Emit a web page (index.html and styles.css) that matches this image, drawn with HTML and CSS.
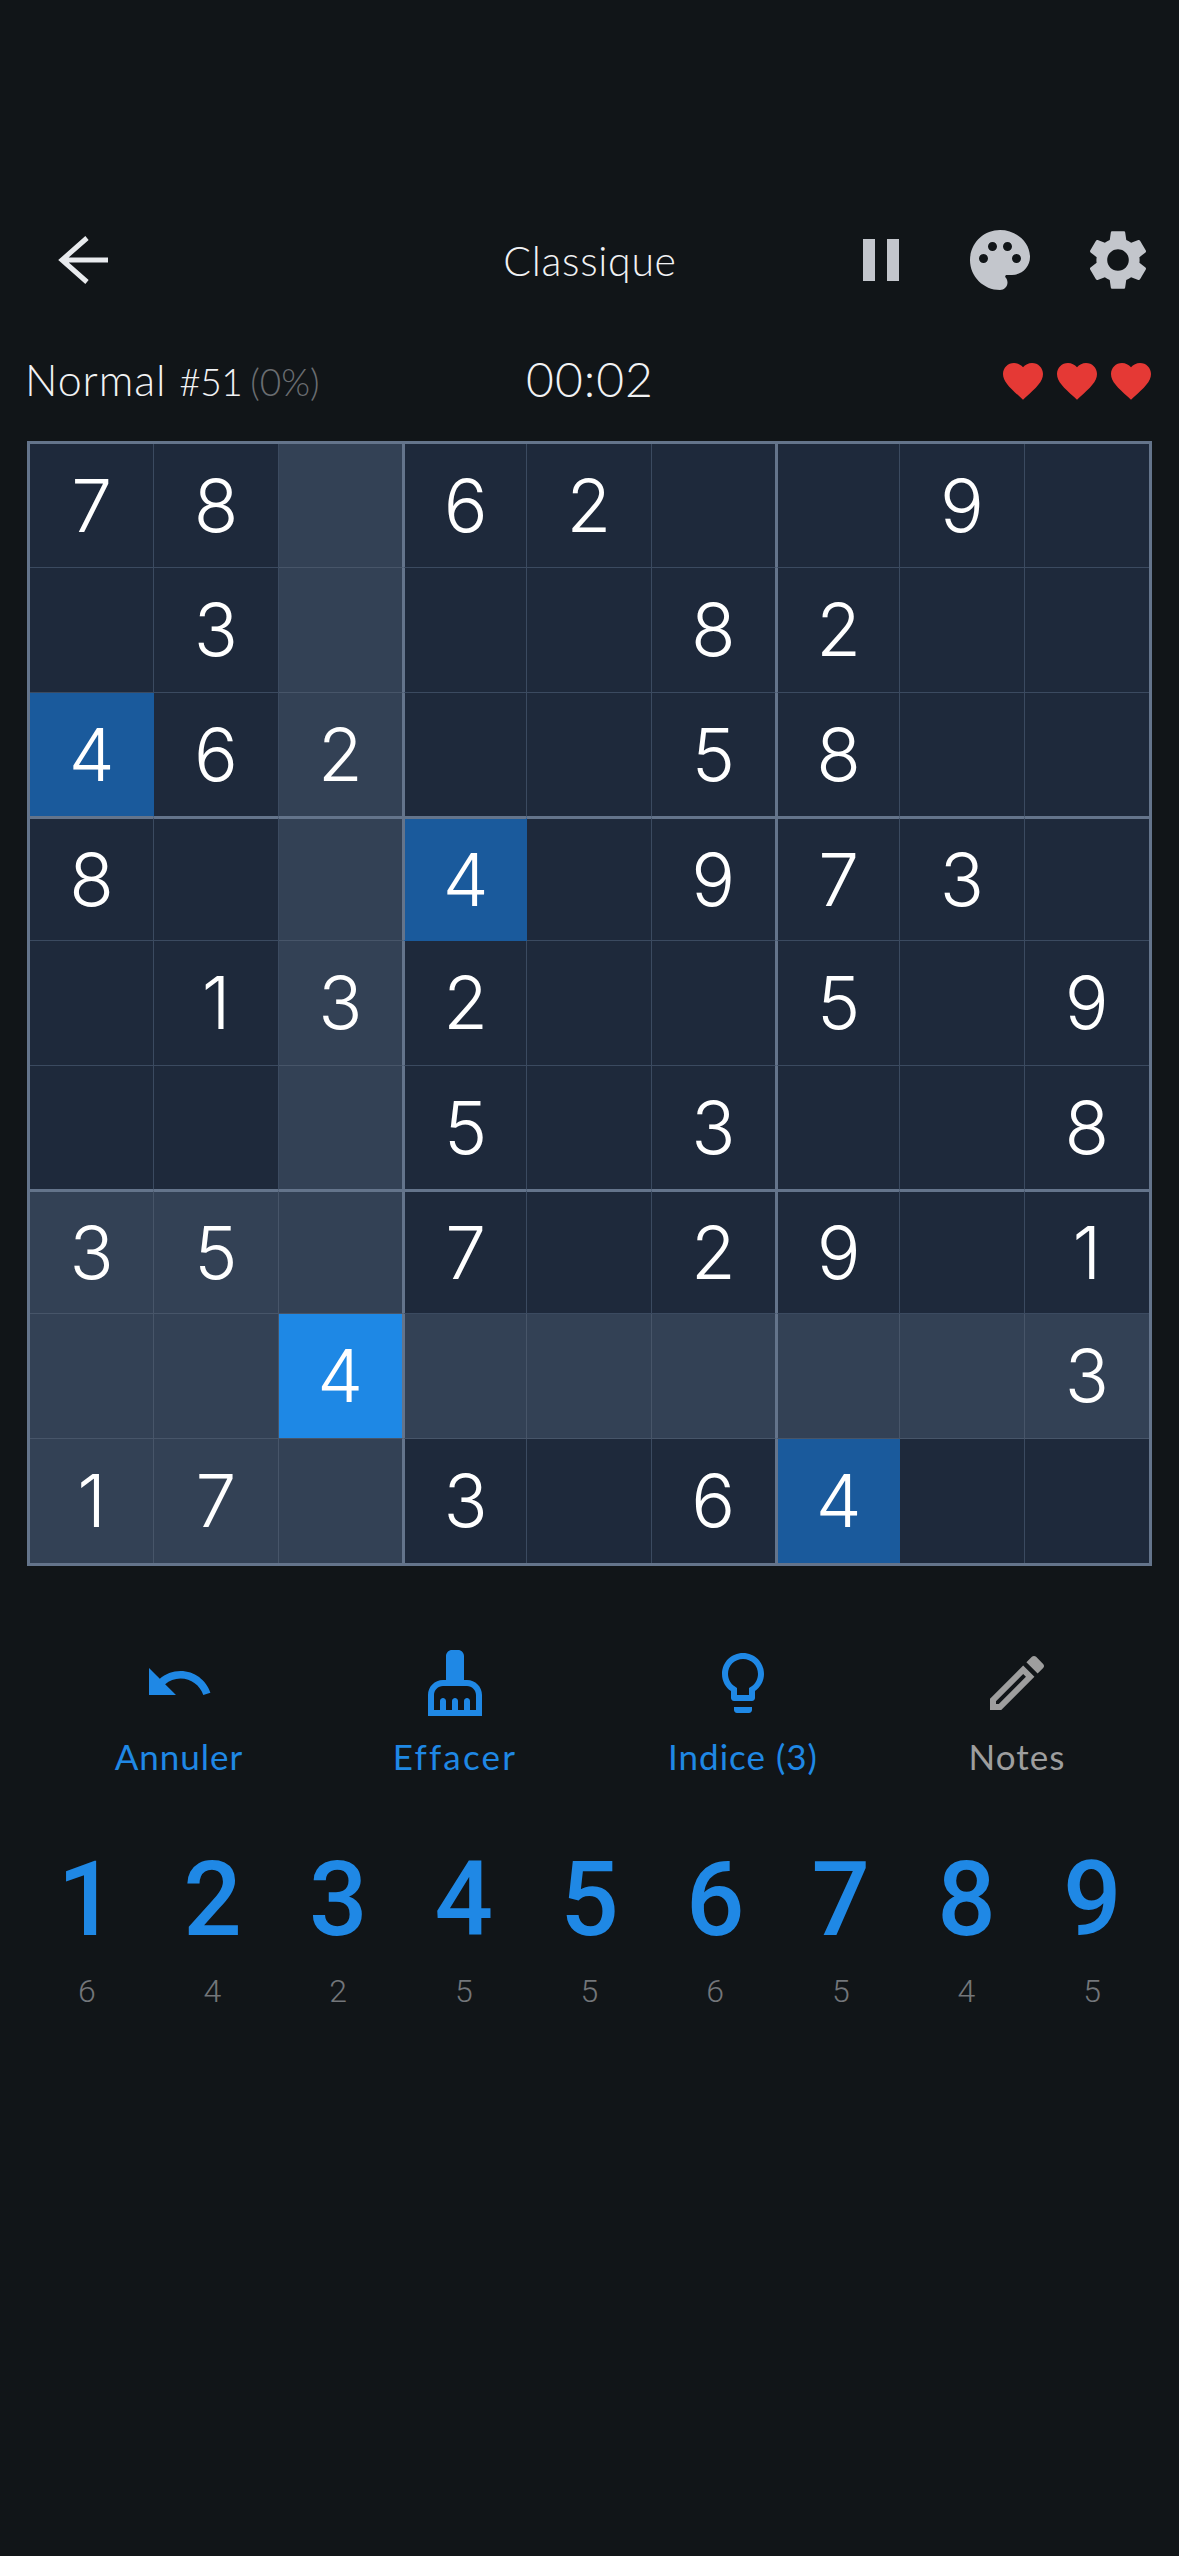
FILE: index.html
```html
<!DOCTYPE html>
<html lang="fr">
<head>
<meta charset="utf-8">
<title>Classique</title>
<link rel="stylesheet" href="styles.css">
</head>
<body>
<main class="app">
  <header class="topbar">
    <div class="topbar-left">
      <svg class="icon-72 icon-back" viewBox="0 0 72 72"><path d="M39 14 14 36l25 22M14 36h46"/></svg>
    </div>
    <h1 class="title">Classique</h1>
    <div class="topbar-right">
      <svg class="icon-72 icon-grey" viewBox="0 0 24 24"><path d="M6 19h4V5H6v14zm8-14v14h4V5h-4z"/></svg>
      <svg class="icon-72 icon-grey" viewBox="0 0 24 24"><path fill-rule="evenodd" d="M12 2C6.49 2 2 6.49 2 12s4.49 10 10 10c1.38 0 2.5-1.12 2.5-2.5 0-.61-.23-1.2-.64-1.67-.08-.1-.13-.21-.13-.33 0-.28.22-.5.5-.5H16c3.31 0 6-2.69 6-6 0-4.96-4.49-9-10-9zm5.5 11c-.83 0-1.5-.67-1.5-1.5s.67-1.5 1.5-1.5 1.5.67 1.5 1.5-.67 1.5-1.5 1.5zm-3-4c-.83 0-1.5-.67-1.5-1.5S13.67 6 14.5 6s1.5.67 1.5 1.5S15.33 9 14.5 9zM5 11.500c0-.83.67-1.5 1.5-1.5s1.5.67 1.5 1.5S7.33 13 6.500 13 5 12.330 5 11.500zM8 7.500c0-.83.67-1.500 1.500-1.500s1.500.67 1.500 1.500S10.330 9 9.500 9 8 8.330 8 7.500z"/></svg>
      <svg class="icon-72 icon-grey" viewBox="0 0 24 24"><path fill-rule="evenodd" d="M19.14 12.94c.04-.3.06-.61.06-.94 0-.32-.02-.64-.07-.94l2.03-1.58c.18-.14.23-.41.12-.61l-1.92-3.32c-.12-.22-.37-.29-.59-.22l-2.39.96c-.5-.38-1.03-.7-1.62-.94l-.36-2.54c-.04-.24-.24-.41-.48-.41h-3.84c-.24 0-.43.17-.47.41l-.36 2.54c-.59.24-1.13.57-1.62.94l-2.39-.96c-.22-.08-.47 0-.59.22L2.74 8.87c-.12.21-.08.47.12.61l2.03 1.58c-.05.3-.09.63-.09.94s.02.64.07.94l-2.03 1.58c-.18.14-.23.41-.12.61l1.92 3.32c.12.22.37.29.59.22l2.39-.96c.5.38 1.03.7 1.62.94l.36 2.54c.05.24.24.41.48.41h3.84c.24 0 .44-.17.47-.41l.36-2.54c.59-.24 1.13-.56 1.62-.94l2.39.96c.22.08.47 0 .59-.22l1.92-3.32c.12-.22.07-.47-.12-.61l-2.01-1.58zM12 15.6c-1.98 0-3.6-1.62-3.6-3.6s1.62-3.6 3.6-3.6 3.6 1.62 3.6 3.6-1.62 3.6-3.6 3.6z"/></svg>
    </div>
  </header>

  <section class="status">
    <div class="status-left"><span class="level">Normal</span> <span class="game-no">#51</span> <span class="percent">(0%)</span></div>
    <div class="timer">00:02</div>
    <div class="hearts">
      <svg class="icon-48" viewBox="0 0 24 24"><path d="M12 21.35l-1.45-1.32C5.4 15.36 2 12.28 2 8.5 2 5.42 4.42 3 7.5 3c1.74 0 3.41.81 4.5 2.09C13.09 3.81 14.76 3 16.5 3 19.58 3 22 5.42 22 8.5c0 3.78-3.4 6.86-8.55 11.54L12 21.35z"/></svg>
      <svg class="icon-48" viewBox="0 0 24 24"><path d="M12 21.35l-1.45-1.32C5.4 15.36 2 12.28 2 8.5 2 5.42 4.42 3 7.5 3c1.74 0 3.41.81 4.5 2.09C13.09 3.81 14.76 3 16.5 3 19.58 3 22 5.42 22 8.5c0 3.78-3.4 6.86-8.55 11.54L12 21.35z"/></svg>
      <svg class="icon-48" viewBox="0 0 24 24"><path d="M12 21.35l-1.45-1.32C5.4 15.36 2 12.28 2 8.5 2 5.42 4.42 3 7.5 3c1.74 0 3.41.81 4.5 2.09C13.09 3.81 14.76 3 16.5 3 19.58 3 22 5.42 22 8.5c0 3.78-3.4 6.86-8.55 11.54L12 21.35z"/></svg>
    </div>
  </section>

  <section class="board">
    <div class="cell">7</div><div class="cell">8</div><div class="cell hl"></div><div class="cell">6</div><div class="cell">2</div><div class="cell"></div><div class="cell"></div><div class="cell">9</div><div class="cell"></div>
    <div class="cell"></div><div class="cell">3</div><div class="cell hl"></div><div class="cell"></div><div class="cell"></div><div class="cell">8</div><div class="cell">2</div><div class="cell"></div><div class="cell"></div>
    <div class="cell same">4</div><div class="cell">6</div><div class="cell hl">2</div><div class="cell"></div><div class="cell"></div><div class="cell">5</div><div class="cell">8</div><div class="cell"></div><div class="cell"></div>
    <div class="cell">8</div><div class="cell"></div><div class="cell hl"></div><div class="cell same">4</div><div class="cell"></div><div class="cell">9</div><div class="cell">7</div><div class="cell">3</div><div class="cell"></div>
    <div class="cell"></div><div class="cell">1</div><div class="cell hl">3</div><div class="cell">2</div><div class="cell"></div><div class="cell"></div><div class="cell">5</div><div class="cell"></div><div class="cell">9</div>
    <div class="cell"></div><div class="cell"></div><div class="cell hl"></div><div class="cell">5</div><div class="cell"></div><div class="cell">3</div><div class="cell"></div><div class="cell"></div><div class="cell">8</div>
    <div class="cell hl">3</div><div class="cell hl">5</div><div class="cell hl"></div><div class="cell">7</div><div class="cell"></div><div class="cell">2</div><div class="cell">9</div><div class="cell"></div><div class="cell">1</div>
    <div class="cell hl"></div><div class="cell hl"></div><div class="cell sel">4</div><div class="cell hl"></div><div class="cell hl"></div><div class="cell hl"></div><div class="cell hl"></div><div class="cell hl"></div><div class="cell hl">3</div>
    <div class="cell hl">1</div><div class="cell hl">7</div><div class="cell hl"></div><div class="cell">3</div><div class="cell"></div><div class="cell">6</div><div class="cell same">4</div><div class="cell"></div><div class="cell"></div>
  </section>

  <section class="actions">
    <div class="action action-on">
      <svg class="icon-72" viewBox="0 0 24 24"><path d="M12.5 8c-2.65 0-5.05.99-6.9 2.6L2 7v9h9l-3.62-3.62c1.39-1.16 3.160-1.880 5.120-1.880 3.540 0 6.550 2.310 7.600 5.500l2.370-.78C21.080 11.030 17.150 8 12.500 8z"/></svg>
      <span class="action-label">Annuler</span>
    </div>
    <div class="action action-on">
      <svg class="icon-72" viewBox="0 0 24 24"><path fill-rule="evenodd" d="M16 11h-1V3c0-1.100-.9-2-2-2h-2c-1.100 0-2 .9-2 2v8H8c-2.760 0-5 2.240-5 5v7h18v-7c0-2.760-2.240-5-5-5zm3 10h-2v-3c0-.55-.45-1-1-1s-1 .45-1 1v3h-2v-3c0-.55-.45-1-1-1s-1 .45-1 1v3H9v-3c0-.55-.45-1-1-1s-1 .45-1 1v3H5v-5c0-1.650 1.350-3 3-3h8c1.650 0 3 1.350 3 3v5z"/></svg>
      <span class="action-label action-label-wide">Effacer</span>
    </div>
    <div class="action action-on">
      <svg class="icon-72" viewBox="0 0 24 24"><path fill-rule="evenodd" d="M9 21c0 .5.4 1 1 1h4c.6 0 1-.5 1-1v-1H9v1zm3-19C8.100 2 5 5.100 5 9c0 2.400 1.200 4.500 3 5.700V17c0 .5.4 1 1 1h6c.6 0 1-.5 1-1v-2.300c1.800-1.300 3-3.400 3-5.700 0-3.900-3.100-7-7-7zm2.900 11.100l-.9.6V16h-4v-2.300l-.8-.6C7.800 12.200 7 10.600 7 9c0-2.800 2.200-5 5-5s5 2.200 5 5c0 1.600-.8 3.200-2.100 4.100z"/></svg>
      <span class="action-label">Indice (3)</span>
    </div>
    <div class="action action-off">
      <svg class="icon-72" viewBox="0 0 24 24"><path fill-rule="evenodd" d="M14.060 9.020l.92.92L5.920 19H5v-.92l9.060-9.060M17.660 3c-.25 0-.51.1-.7.29l-1.830 1.830 3.750 3.750 1.830-1.830c.39-.39.39-1.020 0-1.410l-2.340-2.340c-.2-.2-.45-.29-.71-.29zm-3.600 3.190L3 17.250V21h3.750L17.810 9.940l-3.750-3.750z"/></svg>
      <span class="action-label">Notes</span>
    </div>
  </section>

  <section class="numpad">
    <div class="key"><span class="key-digit">1</span><span class="key-count">6</span></div>
    <div class="key"><span class="key-digit">2</span><span class="key-count">4</span></div>
    <div class="key"><span class="key-digit">3</span><span class="key-count">2</span></div>
    <div class="key"><span class="key-digit">4</span><span class="key-count">5</span></div>
    <div class="key"><span class="key-digit">5</span><span class="key-count">5</span></div>
    <div class="key"><span class="key-digit">6</span><span class="key-count">6</span></div>
    <div class="key"><span class="key-digit">7</span><span class="key-count">5</span></div>
    <div class="key"><span class="key-digit">8</span><span class="key-count">4</span></div>
    <div class="key"><span class="key-digit">9</span><span class="key-count">5</span></div>
  </section>
</main>
</body>
</html>
```

FILE: styles.css
```css
* { box-sizing: border-box; }
html, body { margin: 0; background: #111518; }
body { font-family: "Lato", "Noto Sans", sans-serif; color: #e8eaed; }
.app { width: 1179px; height: 2556px; padding-top: 224px; overflow: hidden; }

svg { display: block; fill: currentColor; }
.icon-72 { width: 72px; height: 72px; }
.icon-48 { width: 48px; height: 48px; color: #e53935; }
.icon-grey { color: #c3c6cc; }
.icon-back { fill: none; stroke: #e8eaed; stroke-width: 5; margin-left: 22px; }

.topbar { display: grid; grid-template-columns: 1fr auto 1fr; align-items: center; height: 72px; padding: 0 25px 0 26px; }
.topbar-right { display: flex; justify-content: flex-end; gap: 46.5px; }
.title { margin: 0; font-size: 41px; font-weight: 300; letter-spacing: .7px; color: #f1f2f4; }

.status { display: grid; grid-template-columns: 1fr auto 1fr; align-items: center; height: 60px; margin-top: 54px; padding: 0 24px 0 25px; }
.status-left { display: flex; align-items: baseline; white-space: nowrap; padding-bottom: 3px; font-weight: 300; }
.level { font-size: 43px; letter-spacing: .9px; margin-right: 13px; color: #f1f2f4; }
.game-no { font-size: 37px; letter-spacing: -.5px; margin-right: 8px; color: #f1f2f4; }
.percent { font-size: 37px; color: #6a6d71; }
.timer { font-size: 48px; font-weight: 300; letter-spacing: 1px; padding-bottom: 5px; color: #f1f2f4; }
.hearts { display: flex; justify-content: flex-end; gap: 6px; }

.board { display: grid; grid-template-columns: repeat(9, 1fr); grid-template-rows: repeat(9, 1fr); width: 1125px; height: 1125px; margin: 31px 0 0 27px; border: 3px solid #64748b; }
.cell { display: flex; align-items: center; justify-content: center; background: #1e293b; border-right: 1px solid #3b4a60; border-bottom: 1px solid #3b4a60; font-family: "Inter", sans-serif; font-size: 73px; font-weight: 350; color: #fff; }
.hl { background: #334155; border-color: #475569; }
.same { background: #1a5a9c; border-color: #1a5a9c; }
.sel { background: #1e88e5; border-color: #475569; }
.cell:nth-child(9n) { border-right: 0; }
.cell:nth-child(n+73) { border-bottom: 0; }
.cell:nth-child(9n+3), .cell:nth-child(9n+6) { border-right-color: #64748b; }
.cell:nth-child(9n+4), .cell:nth-child(9n+7) { border-left: 2px solid #64748b; }
.cell:nth-child(n+19):nth-child(-n+27), .cell:nth-child(n+46):nth-child(-n+54) { border-bottom-color: #64748b; }
.cell:nth-child(n+28):nth-child(-n+36), .cell:nth-child(n+55):nth-child(-n+63) { border-top: 2px solid #64748b; }

.actions { display: grid; grid-template-columns: 280px 272px 304px 244px; margin: 81px 0 0 39px; }
.action { display: flex; flex-direction: column; align-items: center; gap: 15px; }
.action-on { color: #1f88e5; }
.action-off { color: #9e9e9e; }
.action-label { font-size: 35px; letter-spacing: 1px; line-height: 44px; white-space: nowrap; }
.action-label-wide { letter-spacing: 2.2px; }

.numpad { display: grid; grid-template-columns: repeat(9, 1fr); margin: 67px 24px 0; }
.key { display: flex; flex-direction: column; align-items: center; }
.key-digit { font-family: "Roboto", sans-serif; font-weight: 500; font-size: 103px; line-height: 110px; color: #1f88e5; }
.key-count { font-family: "Roboto", sans-serif; font-weight: 300; font-size: 32px; line-height: 40px; margin-top: 16px; color: #73767a; }
```
